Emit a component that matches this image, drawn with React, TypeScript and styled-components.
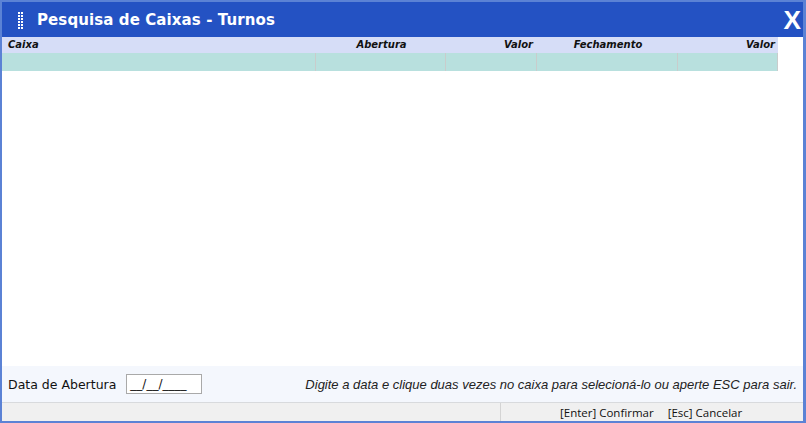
import React from "react";
import styled, { createGlobalStyle } from "styled-components";

const GlobalStyle = createGlobalStyle`
  html, body {
    margin: 0;
    padding: 0;
    background: #ffffff;
  }
`;

interface Column {
  title: string;
  width: number;
  align: "left" | "center" | "right";
}

const columns: Column[] = [
  { title: "Caixa", width: 313, align: "left" },
  { title: "Abertura", width: 130, align: "center" },
  { title: "Valor", width: 91, align: "right" },
  { title: "Fechamento", width: 141, align: "center" },
  { title: "Valor", width: 101, align: "right" },
];

const gridTemplate = columns.map((c) => `${c.width}px`).join(" ");

const Window = styled.div`
  width: 806px;
  height: 423px;
  box-sizing: border-box;
  border-style: solid;
  border-color: #5b82d5;
  border-width: 2px 3px 2px 2px;
  display: flex;
  flex-direction: column;
  background: #ffffff;
  overflow: hidden;
`;

const TitleBar = styled.div`
  height: 35px;
  flex-shrink: 0;
  background: #2452c3;
  display: flex;
  align-items: center;
  padding-left: 16px;
  color: #ffffff;
`;

const Grip = styled.svg`
  width: 5px;
  height: 18px;
  margin-right: 14px;
  margin-top: 2px;
`;

const Title = styled.div`
  font-family: "DejaVu Sans", Verdana, sans-serif;
  font-weight: bold;
  font-size: 15px;
  letter-spacing: 0.1px;
  flex: 1;
`;

const CloseButton = styled.div`
  font-family: "Liberation Sans", Arial, sans-serif;
  font-weight: bold;
  font-size: 25px;
  line-height: 1;
  margin-right: 2px;
  margin-top: 1px;
  transform: scaleX(1.05);
`;

const Table = styled.div`
  width: 776px;
  display: flex;
  flex-direction: column;
`;

const HeaderRow = styled.div`
  display: grid;
  grid-template-columns: ${gridTemplate};
  height: 16px;
  background: #d6ddf7;
`;

const HeaderCell = styled.div<{ $align: string }>`
  font-family: "DejaVu Sans", Verdana, sans-serif;
  font-weight: bold;
  font-style: italic;
  font-size: 10px;
  line-height: 16px;
  color: #111111;
  text-align: ${(p) => p.$align};
  padding: 0 3px 0 6px;
  white-space: nowrap;
`;

const DataRow = styled.div`
  display: grid;
  grid-template-columns: ${gridTemplate};
  height: 18px;
  background: #b8e0de;
`;

const DataCell = styled.div<{ $first: boolean }>`
  border-left: ${(p) => (p.$first ? "none" : "1px solid #c9cccc")};
  &:last-child {
    border-right: 1px solid #c9cccc;
  }
`;

const Body = styled.div`
  flex: 1;
  background: #ffffff;
`;

const FilterPanel = styled.div`
  height: 36px;
  flex-shrink: 0;
  background: #f4f7fd;
  border-bottom: 1px solid #d8dadd;
  display: flex;
  align-items: center;
  padding: 0 6px 0 6px;
`;

const Label = styled.span`
  font-family: "DejaVu Sans", Tahoma, sans-serif;
  font-size: 12.5px;
  color: #111111;
  margin-right: 10px;
`;

const DateInput = styled.div`
  width: 76px;
  height: 20px;
  box-sizing: border-box;
  border: 1px solid #a9a9a9;
  background: #ffffff;
  font-family: "DejaVu Sans", Tahoma, sans-serif;
  font-size: 12px;
  line-height: 18px;
  padding-left: 3px;
  color: #111111;
`;

const Hint = styled.span`
  margin-left: auto;
  font-family: "Liberation Sans", Arial, sans-serif;
  font-style: italic;
  font-size: 13px;
  color: #222222;
`;

const StatusBar = styled.div`
  height: 18px;
  flex-shrink: 0;
  background: #f0f0f0;
  display: flex;
`;

const StatusLeft = styled.div`
  width: 498px;
  border-right: 1px solid #d4d4d4;
`;

const StatusRight = styled.div`
  flex: 1;
  display: flex;
  align-items: center;
  padding-left: 59px;
  gap: 14px;
  font-family: "Open Sans", "Noto Sans", sans-serif;
  font-size: 11.5px;
  color: #111111;
`;

function GripIcon() {
  const dots = [];
  for (let r = 0; r < 6; r++) {
    for (let c = 0; c < 2; c++) {
      dots.push(<rect key={`${r}-${c}`} x={c * 3} y={r * 3} width={2} height={2} fill="#ffffff" />);
    }
  }
  return (
    <Grip viewBox="0 0 5 18">
      {dots}
    </Grip>
  );
}

export default function App() {
  return (
    <>
      <GlobalStyle />
      <Window>
        <TitleBar>
          <GripIcon />
          <Title>Pesquisa de Caixas - Turnos</Title>
          <CloseButton>X</CloseButton>
        </TitleBar>
        <Table>
          <HeaderRow>
            {columns.map((c, i) => (
              <HeaderCell key={i} $align={c.align}>
                {c.title}
              </HeaderCell>
            ))}
          </HeaderRow>
          <DataRow>
            {columns.map((c, i) => (
              <DataCell key={i} $first={i === 0} />
            ))}
          </DataRow>
        </Table>
        <Body />
        <FilterPanel>
          <Label>Data de Abertura</Label>
          <DateInput>__/__/____</DateInput>
          <Hint>
            Digite a data e clique duas vezes no caixa para selecioná-lo ou aperte ESC para sair.
          </Hint>
        </FilterPanel>
        <StatusBar>
          <StatusLeft />
          <StatusRight>
            <span>[Enter] Confirmar</span>
            <span>[Esc] Cancelar</span>
          </StatusRight>
        </StatusBar>
      </Window>
    </>
  );
}
